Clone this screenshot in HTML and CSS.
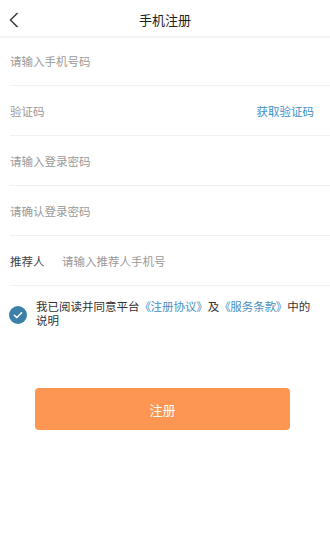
FILE: index.html
```html
<!DOCTYPE html>
<html lang="zh">
<head>
<meta charset="utf-8">
<link rel="stylesheet" href="styles.css">
</head>
<body>
<div class="page">
  <header class="header">
    <svg class="back" width="10" height="16" viewBox="0 0 10 16"><path d="M8.5 1 L1.5 8 L8.5 15" fill="none" stroke="#333" stroke-width="1.4"/></svg>
    <div class="title">手机注册</div>
  </header>
  <div class="form">
    <div class="row"><span class="ph">请输入手机号码</span></div>
    <div class="row"><span class="ph">验证码</span><span class="link">获取验证码</span></div>
    <div class="row"><span class="ph">请输入登录密码</span></div>
    <div class="row"><span class="ph">请确认登录密码</span></div>
    <div class="row"><span class="label">推荐人</span><span class="ph">请输入推荐人手机号</span></div>
  </div>
  <div class="agree">
    <svg class="check" width="18" height="18" viewBox="0 0 18 18"><circle cx="9" cy="9" r="9" fill="#3a80a9"/><path d="M5.3 9.2 L7.9 11.6 L12.6 6.8" fill="none" stroke="#fff" stroke-width="1.5" stroke-linecap="round" stroke-linejoin="round"/></svg>
    <p class="agree-text">我已阅读并同意平台<span class="blue">《 注册协议 》</span>及<span class="blue">《 服务条款 》</span>中的说明</p>
  </div>
  <div class="btn-wrap"><div class="btn">注册</div></div>
</div>
</body>
</html>
```
FILE: styles.css
```css
* { box-sizing: border-box; margin: 0; padding: 0; }
body { background: #fff; font-family: "Noto Sans CJK SC", "Noto Sans", sans-serif; width: 330px; height: 550px; overflow: hidden; }
.page { width: 330px; }
.header { position: relative; height: 37px; display: flex; align-items: center; justify-content: center; box-shadow: 0 1px 2px rgba(0,0,0,0.05); border-bottom: 1px solid #f3f3f3; }
.back { position: absolute; left: 9px; top: 12px; }
.title { font-size: 13px; color: #222; padding-top: 2px; }
.form { padding-left: 10px; }
.row { height: 50px; display: flex; align-items: center; border-bottom: 1px solid #f1f1f1; padding-right: 16px; font-size: 11.5px; }
.row:first-child { height: 49px; }
.ph { color: #999; flex: 1; }
.label { color: #444; width: 52px; }
.link { color: #3d8fcc; }
.agree { display: flex; align-items: flex-start; padding: 13px 13px 0 9px; }
.check { flex: none; margin-top: 7px; margin-right: 9px; }
.agree-text { flex: 1; font-size: 11.5px; line-height: 14px; color: #333; }
.blue { color: #4a8fbe; word-spacing: -3px; }
.btn-wrap { padding: 61px 0 0 35px; }
.btn { width: 255px; height: 42px; border-radius: 4px; background: #fd9653; color: #fff; font-size: 13px; display: flex; align-items: center; justify-content: center; }
```
